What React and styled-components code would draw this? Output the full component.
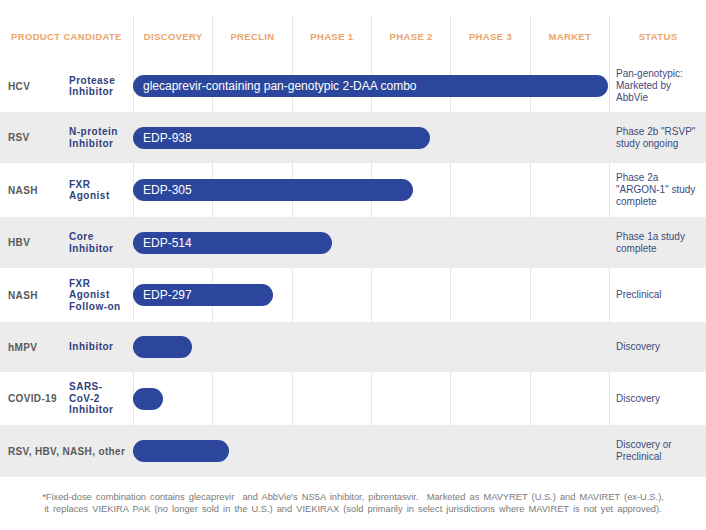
import React from 'react';
import styled, { createGlobalStyle } from 'styled-components';

const GlobalStyle = createGlobalStyle`
  html, body {
    margin: 0;
    padding: 0;
    background: #ffffff;
    font-family: "Liberation Sans", Arial, sans-serif;
  }
`;

const STAGES = ['DISCOVERY', 'PRECLIN', 'PHASE 1', 'PHASE 2', 'PHASE 3', 'MARKET'];

const rows = [
  { product: 'HCV', candidate: ['Protease', 'Inhibitor'], bar: 475, label: 'glecaprevir-containing pan-genotypic 2-DAA combo', status: ['Pan-genotypic:', 'Marketed by', 'AbbVie'], h: 52 },
  { product: 'RSV', candidate: ['N-protein', 'Inhibitor'], bar: 297, label: 'EDP-938', status: ['Phase 2b "RSVP"', 'study ongoing'], h: 51 },
  { product: 'NASH', candidate: ['FXR', 'Agonist'], bar: 280, label: 'EDP-305', status: ['Phase 2a', '"ARGON-1" study', 'complete'], h: 54 },
  { product: 'HBV', candidate: ['Core', 'Inhibitor'], bar: 199, label: 'EDP-514', status: ['Phase 1a study', 'complete'], h: 51 },
  { product: 'NASH', candidate: ['FXR', 'Agonist', 'Follow-on'], bar: 140, label: 'EDP-297', status: ['Preclinical'], h: 54 },
  { product: 'hMPV', candidate: ['Inhibitor'], bar: 59, label: '', status: ['Discovery'], h: 50 },
  { product: 'COVID-19', candidate: ['SARS-', 'CoV-2', 'Inhibitor'], bar: 30, label: '', status: ['Discovery'], h: 53 },
  { product: 'RSV, HBV, NASH, other', wide: true, bar: 96, label: '', status: ['Discovery or', 'Preclinical'], h: 52 },
];

const Page = styled.div`
  width: 706px;
  padding-top: 16px;
`;

const Row = styled.div`
  display: grid;
  grid-template-columns: 65px 68px 476px 97px;
  height: ${p => p.$h}px;
  background: ${p => (p.$shaded ? '#ececec' : '#ffffff')};
`;

const HeaderRow = styled(Row)`
  height: 44px;
`;

const HeadCell = styled.div`
  display: flex;
  align-items: center;
  justify-content: ${p => (p.$left ? 'flex-start' : 'center')};
  padding: 0 0 4px ${p => (p.$left ? '11px' : '0')};
  grid-column: ${p => p.$span || 'auto'};
  border-left: ${p => (p.$line ? '1px solid #e6e6e6' : 'none')};
  color: #eaa56c;
  font-size: 9.5px;
  font-weight: bold;
  letter-spacing: 0.35px;
  white-space: nowrap;
`;

const Product = styled.div`
  display: flex;
  align-items: center;
  padding-left: 8px;
  grid-column: ${p => (p.$wide ? 'span 2' : 'auto')};
  color: #5a5a5a;
  font-size: 10px;
  font-weight: bold;
  letter-spacing: 0.35px;
  white-space: nowrap;
`;

const Candidate = styled.div`
  display: flex;
  flex-direction: column;
  justify-content: center;
  padding-left: 4px;
  color: #2f3f7c;
  font-size: 10px;
  font-weight: bold;
  letter-spacing: 0.5px;
  line-height: 11.5px;
`;

const Stages = styled.div`
  display: grid;
  grid-template-columns: repeat(6, minmax(0, 1fr));
  grid-template-rows: 100%;
`;

const StageCell = styled.div`
  grid-row: 1;
  grid-column: ${p => p.$col};
  border-left: 1px solid ${p => (p.$shaded ? '#ececec' : '#e6e6e6')};
`;

const Bar = styled.div`
  grid-row: 1;
  grid-column: 1 / -1;
  align-self: center;
  height: 22px;
  box-sizing: border-box;
  padding-left: 10px;
  display: flex;
  align-items: center;
  border-radius: 11px;
  background: #2c469d;
  color: #ffffff;
  font-size: 12px;
  white-space: nowrap;
  z-index: 1;
`;

const Status = styled.div`
  display: flex;
  flex-direction: column;
  justify-content: center;
  padding-left: 6px;
  border-left: 1px solid ${p => (p.$shaded ? '#ececec' : '#e6e6e6')};
  color: #3d4b7c;
  font-size: 10px;
  line-height: 12px;
  white-space: nowrap;
`;

const Footnote = styled.div`
  margin-top: 15px;
  text-align: center;
  color: #7a7a7a;
  font-size: 9.3px;
  line-height: 11.5px;
  word-spacing: 1.5px;
  white-space: nowrap;
`;

export default function App() {
  return (
    <Page>
      <GlobalStyle />
      <HeaderRow>
        <HeadCell $left $span="span 2">PRODUCT CANDIDATE</HeadCell>
        <Stages>
          {STAGES.map(s => (
            <HeadCell key={s} $line>{s}</HeadCell>
          ))}
        </Stages>
        <HeadCell $line>STATUS</HeadCell>
      </HeaderRow>

      {rows.map((r, i) => {
        const shaded = i % 2 === 1;
        return (
          <Row key={i} $h={r.h} $shaded={shaded}>
            <Product $wide={r.wide}>{r.product}</Product>
            {!r.wide && (
              <Candidate>
                {r.candidate.map(c => <span key={c}>{c}</span>)}
              </Candidate>
            )}
            <Stages>
              {STAGES.map((s, j) => <StageCell key={s} $col={j + 1} $shaded={shaded} />)}
              <Bar style={{ width: r.bar }}>{r.label}</Bar>
            </Stages>
            <Status $shaded={shaded}>
              {r.status.map(s => <span key={s}>{s}</span>)}
            </Status>
          </Row>
        );
      })}

      <Footnote>
        *Fixed-dose combination contains glecaprevir&nbsp; and AbbVie's NS5A inhibitor, pibrentasvir.&nbsp; Marketed as MAVYRET (U.S.) and MAVIRET (ex-U.S.),
        <br />
        it replaces VIEKIRA PAK (no longer sold in the U.S.) and VIEKIRAX (sold primarily in select jurisdictions where MAVIRET is not yet approved).
      </Footnote>
    </Page>
  );
}
